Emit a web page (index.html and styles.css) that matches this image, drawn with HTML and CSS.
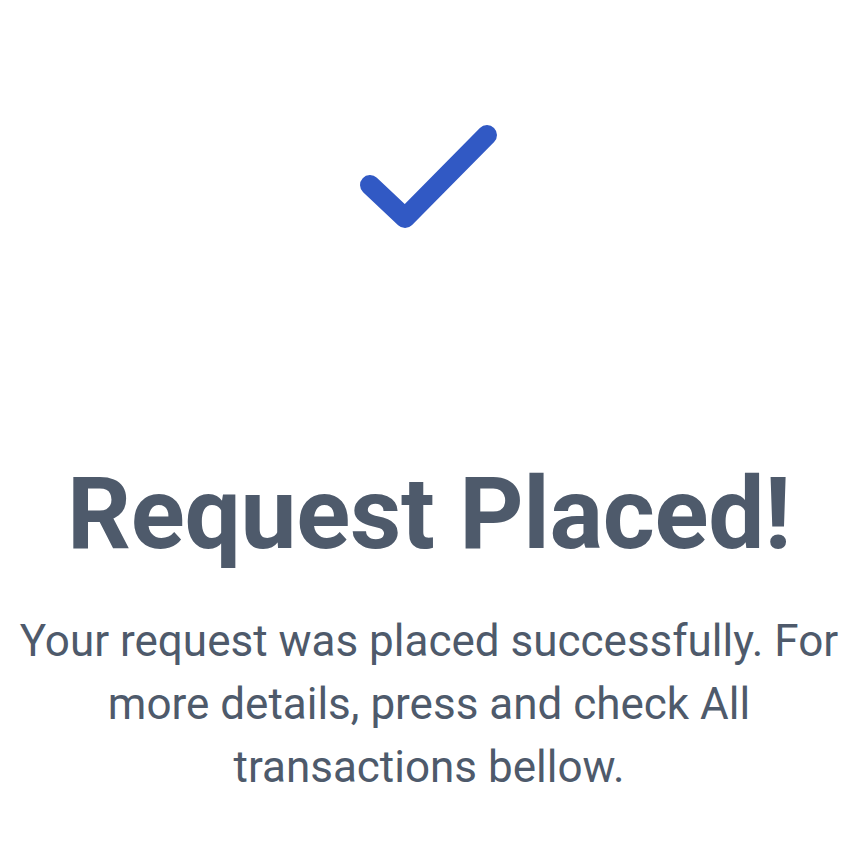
FILE: index.html
```html
<!DOCTYPE html>
<html lang="en">
<head>
<meta charset="utf-8">
<title>Request Placed</title>
<link rel="stylesheet" href="styles.css">
</head>
<body>
<main class="screen">
  <svg class="check" width="160" height="160" viewBox="0 0 160 160" aria-hidden="true">
    <polyline points="21,89 56,122 138,39" fill="none" stroke="#3159c4" stroke-width="20" stroke-linecap="round" stroke-linejoin="round"/>
  </svg>
  <h1 class="title">Request Placed!</h1>
  <p class="message">Your request was placed successfully. For more details, press and check All transactions bellow.</p>
</main>
</body>
</html>
```

FILE: styles.css
```css
html, body {
  margin: 0;
  padding: 0;
  background: #ffffff;
}

.screen {
  display: flex;
  flex-direction: column;
  align-items: center;
  padding-top: 96px;
  font-family: Roboto, "Liberation Sans", sans-serif;
  color: #4e5a6b;
  text-align: center;
}

.check {
  display: block;
}

.title {
  margin: 198px 0 0;
  font-size: 100px;
  font-weight: 700;
  line-height: 120px;
  letter-spacing: -0.3px;
}

.message {
  margin: 36px 0 0;
  width: 830px;
  font-size: 44px;
  font-weight: 400;
  line-height: 63px;
}
```
